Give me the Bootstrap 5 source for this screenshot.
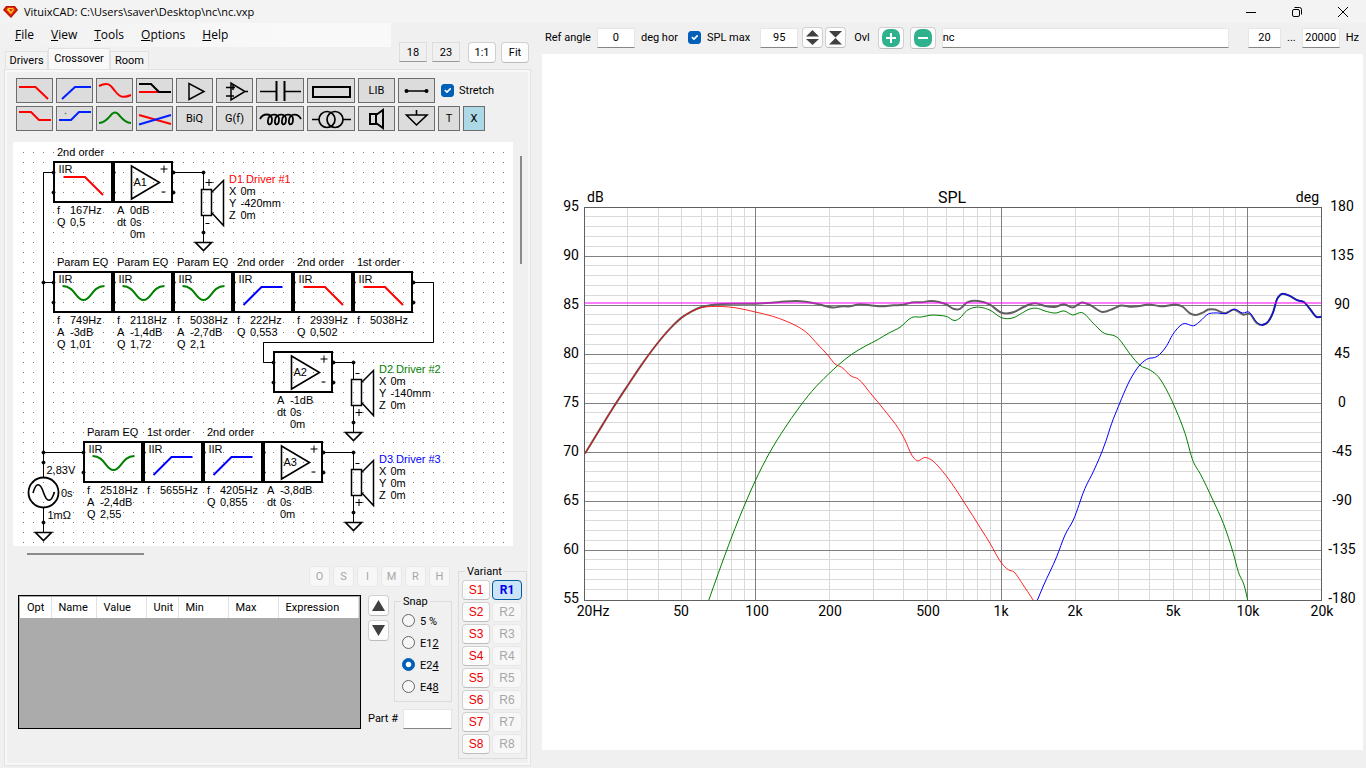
<!DOCTYPE html>
<html lang="en">
<head>
<meta charset="utf-8">
<meta name="viewport" content="width=device-width, initial-scale=1">
<title>VituixCAD: C:\Users\saver\Desktop\nc\nc.vxp</title>
<link rel="stylesheet" href="https://cdn.jsdelivr.net/npm/bootstrap@5.3.0/dist/css/bootstrap.min.css">
<style>
  body { background: #f0f0f0; color: #000; font: 11px/16px Roboto, "Liberation Sans", sans-serif; min-height: 100vh; }
  svg { display: block; }
  svg text { white-space: pre; }
  .title-bar { height: 23px; background: #f3f3f3; padding-left: 3px; }
  .title-text { font: 11px/22px "Open Sans", "Noto Sans", sans-serif; margin-left: 5px; }
  .win-btn { width: 46px; height: 22px; border: 0; background: none; padding: 0; display: grid; place-items: center; }
  .side { flex: 0 0 532px; }
  .menu-strip { width: 391px; height: 24px; gap: 17px; padding-left: 15px; background: linear-gradient(90deg, #f1f1f1, #f9f9f9 75%); font: 12px/24px "Open Sans", "Noto Sans", sans-serif; }
  .menu-strip a { color: #000; text-decoration: none; }
  .tab-strip { height: 22px; padding-left: 5px; }
  .tab-strip .nav-link { padding: 0; height: 18px; text-align: center; color: #000; border: 1px solid #e2e2e2; border-bottom: 0; border-radius: 0; background: #f3f3f3; line-height: 18px; width: 43px; }
  .tab-strip .nav-link.active { height: 21px; width: 62px; background: #f9f9f9; line-height: 19px; }
  .tab-strip .last-tab { width: 39px; }
  .zoom-tools { padding-top: 19px; gap: 5px; }
  .page-frame { border: 1px solid #e2e2e2; box-shadow: inset 0 0 0 2px #f8f8f8; margin: 0 1px 2px 4px; padding: 8px 2px 6px 8px; }
  .field { height: 20px; border: 1px solid #e6e6e6; border-bottom: 1px solid #868686; border-radius: 0; background: #fff; text-align: center; font: inherit; padding: 0; color: #000; min-width: 0; min-height: 0; }
  .field.grayed { background: #f0f0f0; width: 28px; border-color: #ddd #ddd #999; }
  .push { height: 21px; padding: 0; font: inherit; color: #000; background: #fdfdfd; border: 1px solid #d0d0d0; border-bottom-color: #bcbcbc; border-radius: 4px; display: grid; place-items: center; }
  .w21 { width: 21px; }
  .w28 { width: 28px; }
  .w38 { width: 38px; }
  .push:disabled { color: #a6a6a6; background: #f7f7f7; border-color: #e8e8e8; opacity: 1; }
  .part-bar { gap: 3px; padding-left: 3px; margin-bottom: 3px; }
  .part-btn { width: 37px; height: 25px; padding: 0; border: 1px solid #6d6d6d; border-radius: 0; background: #dcdcdc; font: 11px/23px Roboto, sans-serif; color: #000; }
  .part-btn svg { width: 100%; height: 23px; fill: none; stroke: #000; stroke-width: 2; }
  .part-btn.wide { width: 48px; }
  .part-btn.slim { width: 22px; }
  .part-btn.del { background: #add8e6; }
  .form-check-input { width: 13px; height: 13px; margin: 0; border: 1px solid #666; background-color: #f6f6f6; flex: none; }
  .form-check-input:checked { background-color: #005fb8; border-color: #005fb8; }
  .form-check-input[type=checkbox] { border-radius: 3px; }
  .board-row { padding-top: 8px; }
  .board { width: 500px; height: 404px; background: #fff; }
  .thumb-v { width: 2px; height: 108px; background: #8a8a8a; margin: 14px 0 0 7px; }
  .thumb-h { width: 117px; height: 2px; background: #8a8a8a; margin: 7px 0 0 14px; }
  .lower { gap: 6px; padding-top: 11px; }
  .osim { gap: 3px; padding-right: 2px; }
  .parts-box { width: 343px; height: 134px; border: 1px solid #000; background: #ababab; padding: 1px; }
  .parts-tbl { width: 100%; margin: 0; table-layout: fixed; }
  .parts-tbl th { background: #fff; border-right: 1px solid #e2e2e2; height: 21px; padding: 0 0 0 7px; font-weight: 400; line-height: 21px; }
  .frame-box { border: 1px solid #dcdcdc; margin: 0; position: relative; }
  .frame-box legend { position: absolute; top: -8px; left: 6px; width: auto; float: none; font: inherit; padding: 0 2px; margin: 0; background: #f0f0f0; }
  .snap { width: 58px; height: 101px; padding: 11px 0 0 7px; gap: 6px; margin: 6px 0 0 5px; }
  .snap div { gap: 5px; }
  .snap label { padding-top: 1px; line-height: 15px; }
  .snap .form-check-input { margin-top: 1px; }
  .variant { width: 69px; height: 188px; margin-top: 5px; padding: 8px 3px 0; display: grid; grid-template-columns: 28px 30px; column-gap: 2px; row-gap: 2px; align-content: start; }
  .variant .push { height: 20px; width: 100%; }
  .variant .push:not(.on) { font-size: 12px; font-family: "Liberation Sans", sans-serif; }
  .variant .s-btn { color: #f00000; }
  .variant .on { background: #cce4f7; border: 1px solid #005a9e; color: #0000f0; font-weight: 700; font-size: 12px; }
  .plot-bar { height: 31px; padding: 0 3px 2px 3px; }
  .plot-area { background: #fff; margin: 0 3px 18px 0; }
  .ring { width: 26px; height: 22px; }
  .gap-a { margin-left: 6px; }
  .gap-b { margin-left: 10px; }
  .gap-c { margin-left: 2px; }
  .chart { font-family: Roboto, "Liberation Sans", sans-serif; font-size: 14px; }
</style>
</head>
<body class="d-flex flex-column">

<header class="title-bar d-flex align-items-center">
  <svg width="16" height="16" viewBox="0 0 16 16" aria-hidden="true">
    <path d="M3 2h9l3 4-7 8L0 6z" fill="#b51405"/><path d="M4 3h7l2 3-5 6-6-6z" fill="#ee2a10"/><path d="M5 4h5l1 2-3 4-4-4z" fill="#ffd21c"/><path d="M6 5l2 3 2-3" fill="#d93a10"/>
  </svg>
  <span class="title-text me-auto">VituixCAD: C:\Users\saver\Desktop\nc\nc.vxp</span>
  <button class="win-btn" aria-label="Minimize"><svg width="12" height="12" viewBox="0 0 12 12"><path d="M1 6.500h10" stroke="#000"/></svg></button>
  <button class="win-btn" aria-label="Restore"><svg width="12" height="12" viewBox="0 0 12 12" fill="none" stroke="#000"><rect x="1.500" y="3.500" width="7" height="7" rx="1.500"/><path d="M3.500 1.500h5a2 2 0 0 1 2 2v5"/></svg></button>
  <button class="win-btn" aria-label="Close"><svg width="12" height="12" viewBox="0 0 12 12"><path d="M1 1l10 10M11 1L1 11" stroke="#000"/></svg></button>
</header>

<div class="d-flex flex-grow-1">
  <div class="side d-flex flex-column">
    <div class="d-flex">
      <div>
        <nav class="menu-strip d-flex">
          <a href="#"><u>F</u>ile</a><a href="#"><u>V</u>iew</a><a href="#"><u>T</u>ools</a><a href="#"><u>O</u>ptions</a><a href="#"><u>H</u>elp</a>
        </nav>
        <nav class="tab-strip nav align-items-end">
          <a class="nav-link" href="#">Drivers</a>
          <a class="nav-link active" href="#">Crossover</a>
          <a class="nav-link last-tab" href="#">Room</a>
        </nav>
      </div>
      <div class="zoom-tools d-flex ms-2">
        <input class="field grayed" value="18" aria-label="Columns">
        <input class="field grayed" value="23" aria-label="Rows">
        <button class="push w28" style="margin-left:3px">1:1</button>
        <button class="push w28">Fit</button>
      </div>
    </div>

    <main class="page-frame flex-grow-1">
      <div class="part-bar d-flex align-items-center">
        <button class="part-btn" aria-label="Low pass"><svg viewBox="0 0 35 23"><path stroke="red" d="M2 8h16.500l12.500 12"/></svg></button>
        <button class="part-btn" aria-label="High pass"><svg viewBox="0 0 35 23"><path stroke="#0020ff" d="M5 20L18 8h16"/></svg></button>
        <button class="part-btn" aria-label="Shelf"><svg viewBox="0 0 35 23"><path stroke="red" d="M2 7C12 2 14 7 18 12S25 20 34 16"/></svg></button>
        <button class="part-btn" aria-label="Shelving low pass"><svg viewBox="0 0 35 23"><path stroke="red" d="M2 13h20"/><path d="M2 5h12l8 8h12"/></svg></button>
        <button class="part-btn" aria-label="Buffer"><svg viewBox="0 0 35 23"><path stroke-width="1.500" d="M12 4.500v16l15-8z"/></svg></button>
        <button class="part-btn" aria-label="Op amp"><svg viewBox="0 0 35 23"><path stroke-width="1.500" d="M14 4v17l14-8.500zM9 8.500h9M9 17h8M28 12.500h3M16 6v5"/></svg></button>
        <button class="part-btn wide" aria-label="Capacitor"><svg viewBox="0 0 46 23"><path d="M19.500 2v20M27.500 2v20"/><path stroke-width="1.500" d="M3 12.500h16M28 12.500h16"/></svg></button>
        <button class="part-btn wide" aria-label="Resistor"><svg viewBox="0 0 46 23"><rect x="5" y="8" width="37" height="10"/></svg></button>
        <button class="part-btn">LIB</button>
        <button class="part-btn" aria-label="Wire"><svg viewBox="0 0 35 23"><path stroke-width="1.500" d="M7 12h21"/><circle cx="7.500" cy="12" r="1" fill="#000"/><circle cx="27.500" cy="12" r="1" fill="#000"/></svg></button>
        <input class="form-check-input" style="margin-left:3px" type="checkbox" id="stretch" checked>
        <label for="stretch" class="gap-c">Stretch</label>
      </div>
      <div class="part-bar d-flex">
        <button class="part-btn" aria-label="Shelf down"><svg viewBox="0 0 35 23"><path stroke="red" d="M2 5h12l8 8h12"/></svg></button>
        <button class="part-btn" aria-label="Shelf up"><svg viewBox="0 0 35 23"><path stroke="#0020ff" d="M2 13h12l8-8h12"/><circle cx="8.500" cy="6.500" r=".5" stroke="#777" stroke-width="1"/></svg></button>
        <button class="part-btn" aria-label="Parametric EQ"><svg viewBox="0 0 35 23"><path stroke="green" d="M2 16C12 15 13 5.500 18 5.500S24 15 34 16"/></svg></button>
        <button class="part-btn" aria-label="Crossed slopes"><svg viewBox="0 0 35 23"><path stroke="red" d="M2 8l32 9"/><path stroke="#0020ff" d="M2 17.500L34 8"/></svg></button>
        <button class="part-btn">BiQ</button>
        <button class="part-btn">G(f)</button>
        <button class="part-btn wide" aria-label="Inductor"><svg viewBox="0 0 46 23"><path stroke-width="1.800" d="M3 12C6 6 14 6 15 12C15 19 10 19 11 13C12 6 22 6 22 12C22 19 17 19 18 13C19 6 29 6 29 12C29 19 24 19 25 13C26 6 36 6 36 12C36 19 31 19 32 13C33 6 41 6 44 12"/></svg></button>
        <button class="part-btn wide" aria-label="Transformer"><svg viewBox="0 0 46 23"><g stroke-width="1.700"><circle cx="19" cy="12.500" r="8"/><circle cx="27" cy="12.500" r="8"/><path d="M4 12.500h7M35 12.500h8"/></g></svg></button>
        <button class="part-btn" aria-label="Loudspeaker"><svg viewBox="0 0 35 23"><path d="M11 7h6v10h-6zM17 8l7-5v18l-7-5"/></svg></button>
        <button class="part-btn" aria-label="Ground"><svg viewBox="0 0 35 23"><path stroke-width="1.600" d="M17.500 3v5M7.500 8h20.500L17.500 18z"/></svg></button>
        <button class="part-btn slim">T</button>
        <button class="part-btn slim del">X</button>
      </div>

      <div class="board-row d-flex">
        <svg class="board" id="board" viewBox="13 142 500 404" fill="none" stroke="#000" stroke-width="1" font-family="Liberation Sans, Arial, sans-serif" font-size="11" role="img" aria-label="Crossover schematic"></svg>
        <div class="thumb-v"></div>
      </div>
      <div class="thumb-h"></div>

      <div class="lower d-flex">
        <div style="padding-left:5px">
          <div class="osim d-flex justify-content-end">
            <button class="push w21" disabled>O</button><button class="push w21" disabled>S</button><button class="push w21" disabled>I</button><button class="push w21" disabled>M</button><button class="push w21" disabled>R</button><button class="push w21" disabled>H</button>
          </div>
          <div class="d-flex mt-2">
            <div class="parts-box">
              <table class="parts-tbl">
                <colgroup><col style="width:31px"><col style="width:45px"><col style="width:50px"><col style="width:32px"><col style="width:50px"><col style="width:50px"><col></colgroup>
                <thead><tr><th>Opt</th><th>Name</th><th>Value</th><th>Unit</th><th>Min</th><th>Max</th><th>Expression</th></tr></thead>
              </table>
            </div>
            <div style="margin-left:7px">
              <div class="d-flex">
                <div class="d-flex flex-column gap-1">
                  <button class="push w21" aria-label="Move up"><svg width="15" height="13"><path d="M7.500 1L14 12H1z" fill="#404040"/></svg></button>
                  <button class="push w21" aria-label="Move down"><svg width="15" height="13"><path d="M7.500 12L14 1H1z" fill="#404040"/></svg></button>
                </div>
                <fieldset class="frame-box snap d-flex flex-column">
                  <legend>Snap</legend>
                  <div class="d-flex"><input class="form-check-input" type="radio" name="snap" id="s5"><label for="s5">5 %</label></div>
                  <div class="d-flex"><input class="form-check-input" type="radio" name="snap" id="s12"><label for="s12">E1<u>2</u></label></div>
                  <div class="d-flex"><input class="form-check-input" type="radio" name="snap" id="s24" checked><label for="s24">E2<u>4</u></label></div>
                  <div class="d-flex"><input class="form-check-input" type="radio" name="snap" id="s48"><label for="s48">E4<u>8</u></label></div>
                </fieldset>
              </div>
              <div class="d-flex align-items-center justify-content-between" style="margin-top:7px">
                <label for="part">Part #</label><input class="field" id="part" style="width:49px">
              </div>
            </div>
          </div>
        </div>
        <fieldset class="frame-box variant" id="variant"><legend>Variant</legend></fieldset>
      </div>
    </main>
  </div>

  <section class="d-flex flex-column flex-grow-1" style="padding-left:10px">
    <div class="plot-bar d-flex align-items-center">
      <label for="ref">Ref angle</label>
      <input class="field gap-a w38" id="ref" value="0">
      <span class="gap-a">deg hor</span>
      <input class="form-check-input gap-b" type="checkbox" id="splmax" checked>
      <label for="splmax" class="gap-a">SPL max</label>
      <input class="field gap-b w38" value="95" aria-label="SPL maximum">
      <button class="push w21 ms-1" aria-label="Expand"><svg width="15" height="19"><path d="M7.500 2L14 8.500H1zM7.500 17L14 11H1z" fill="#404040"/></svg></button>
      <button class="push w21 gap-c" aria-label="Compress"><svg width="15" height="19"><path d="M1 3h13L7.500 9.500zM1 16.500h13L7.500 10z" fill="#404040"/></svg></button>
      <span class="ms-2">Ovl</span>
      <button class="push ring ms-2" aria-label="Add overlay"><svg width="20" height="18"><rect x="1" y="0" width="18" height="18" rx="7" fill="#2fb18e"/><path d="M10 4v10M5 9h10" stroke="#fff" stroke-width="2"/></svg></button>
      <button class="push ring gap-a" aria-label="Remove overlay"><svg width="20" height="18"><rect x="1" y="0" width="18" height="18" rx="7" fill="#2fb18e"/><path d="M5 9h10" stroke="#fff" stroke-width="2"/></svg></button>
      <input class="field flex-grow-1 text-start gap-a" value="nc" aria-label="Overlay name">
      <input class="field" value="20" aria-label="Minimum frequency" style="width:33px;margin-left:19px">
      <span class="gap-a">...</span>
      <input class="field gap-a w38" id="fmax" value="20000">
      <label for="fmax" class="gap-a me-1">Hz</label>
    </div>
    <div class="plot-area flex-grow-1">
      <svg class="chart" id="chart" width="100%" viewBox="542 54 821 694" role="img" aria-label="SPL chart"></svg>
    </div>
  </section>
</div>

<script src="https://cdn.jsdelivr.net/npm/bootstrap@5.3.0/dist/js/bootstrap.bundle.min.js"></script>
<script>
// ---- variant buttons ----
const variant = document.getElementById('variant');
for (let i = 1; i <= 8; i++) {
  variant.insertAdjacentHTML('beforeend',
    `<button class="push s-btn">S${i}</button><button class="push ${i === 1 ? 'on' : ''}" ${i === 1 ? '' : 'disabled'}>R${i}</button>`);
}

// ---- schematic ----
const txt = (x, y, s, c = '#000') => `<text x="${x}" y="${y}" fill="${c}" stroke="none">${s}</text>`;
const dot = (x, y) => `<circle cx="${x}" cy="${y}" r="1.500" fill="#000"/>`;
const shapes = {
  lp: '<path stroke="red" stroke-width="2" d="M10 4.500h21.500l18 18"/>',
  hp: '<path stroke="#00f" stroke-width="2" d="M10 22.500l18-18h21"/>',
  eq: '<path stroke="green" stroke-width="2" d="M9 3.500C22 4 22 17.500 30 17.500S38 4 51 3.500"/>'
};
let b = '';
for (let y = 152; y < 546; y += 10) b += `<path stroke="#777" stroke-dasharray="1 9" d="M23 ${y + .5}H504"/>`;

function block(x, y, kind, title, rows) {
  b += `<g transform="translate(${x} ${y})"><rect x="0.500" y="-10.500" width="58" height="40" stroke-width="2"/>`;
  b += dot(0, 0) + dot(0, 20) + dot(60, 0) + dot(60, 20);
  if (kind[0] === 'A') {
    b += `<path stroke-width="1.600" d="M18-6.500L46 10 18 26.500z"/><path d="M47-3.500h7M50.500-7v7M48 19.500h4"/>` + txt(20, 13.5, kind);
  } else {
    b += shapes[kind] + txt(5, 0.5, 'IIR') + txt(3.5, -16.5, title);
  }
  rows.forEach((r, i) => { b += txt(3.5, 41.5 + 12 * i, r[0]) + txt(16.5, 41.5 + 12 * i, r[1]); });
  b += '</g>';
}
function ground(x, y) { b += `<path stroke-width="1.600" d="M${x - 8} ${y}h16l-8 8z"/>`; }
function driver(x, y, name, color, yPos, plusTop) {
  const plus = cy => `<path d="M2 ${cy}h7M5.500 ${cy - 3.5}v7"/>`, minus = cy => `<path d="M2 ${cy}h4"/>`;
  b += `<g transform="translate(${x} ${y})">` + dot(0, 0) + dot(0, 60) +
    `<path d="M0 0v17M0 43v27"/><path stroke-width="1.500" d="M-2 17h10v26h-10zM8 20L20 8v45L8 40"/>` +
    (plusTop ? plus(10) + minus(51) : minus(11) + plus(50)) +
    txt(25.5, 10.5, name, color) + txt(25.5, 22.5, 'X') + txt(37, 22.5, '0m') +
    txt(25.5, 34.5, 'Y') + txt(37, 34.5, yPos) + txt(25.5, 46.5, 'Z') + txt(37, 46.5, '0m') + '</g>';
  ground(x, y + 70);
}
block(53.5, 172.5, 'lp', '2nd order', [['f', '167Hz'], ['Q', '0,5']]);
block(113.5, 172.5, 'A1', '', [['A', '0dB'], ['dt', '0s'], ['', '0m']]);
block(53.5, 282.5, 'eq', 'Param EQ', [['f', '749Hz'], ['A', '-3dB'], ['Q', '1,01']]);
block(113.5, 282.5, 'eq', 'Param EQ', [['f', '2118Hz'], ['A', '-1,4dB'], ['Q', '1,72']]);
block(173.5, 282.5, 'eq', 'Param EQ', [['f', '5038Hz'], ['A', '-2,7dB'], ['Q', '2,1']]);
block(233.5, 282.5, 'hp', '2nd order', [['f', '222Hz'], ['Q', '0,553']]);
block(293.5, 282.5, 'lp', '2nd order', [['f', '2939Hz'], ['Q', '0,502']]);
block(353.5, 282.5, 'lp', '1st order', [['f', '5038Hz']]);
block(273.5, 362.5, 'A2', '', [['A', '-1dB'], ['dt', '0s'], ['', '0m']]);
block(83.5, 452.5, 'eq', 'Param EQ', [['f', '2518Hz'], ['A', '-2,4dB'], ['Q', '2,55']]);
block(143.5, 452.5, 'hp', '1st order', [['f', '5655Hz']]);
block(203.5, 452.5, 'hp', '2nd order', [['f', '4205Hz'], ['Q', '0,855']]);
block(263.5, 452.5, 'A3', '', [['A', '-3,8dB'], ['dt', '0s'], ['', '0m']]);
driver(203.5, 172.5, 'D1 Driver #1', 'red', '-420mm', true);
driver(353.5, 362.5, 'D2 Driver #2', 'green', '-140mm', false);
driver(353.5, 452.5, 'D3 Driver #3', 'blue', '0m', false);
b += '<path d="M53.500 172.500H43.500V477M43.500 282.500h10M43.500 452.500h40M173.500 172.500h30M333.500 362.500h20M323.500 452.500h30M413.500 282.500h20v60h-170v20h10M43.500 508v24"/>';
b += dot(43.5, 282.5) + dot(43.5, 452.5) + dot(43.5, 462.5) + dot(43.5, 522.5);
b += '<circle cx="43.500" cy="492.500" r="15" stroke-width="1.800"/><path stroke-width="1.600" d="M33 493C36 482 40 482 43.500 492.500S51 503 54.500 492"/>';
ground(43.5, 532.5);
b += txt(46.5, 474, '2,83V') + txt(61, 497, '0s') + txt(47.5, 519, '1mΩ');
document.getElementById('board').innerHTML = b;

// ---- chart ----
const fx = f => 1001.5 + 245.7 * Math.log10(f / 1000), X0 = 584.5, X1 = 1321.5, Y0 = 207.5, Y1 = 600.5;
const snap = v => Math.floor(v) + .5;
let minor = '', major = '';
for (let d = 10; d <= 10000; d *= 10) for (let k = 1; k < 10; k++) {
  const f = d * k; if (f <= 20 || f >= 20000) continue;
  if (k === 1) major += `M${snap(fx(f))} ${Y0}V${Y1}`; else minor += `M${snap(fx(f))} ${Y0}V${Y1}`;
}
for (let i = 1; i < 40; i++) { const p = `M${X0} ${snap(Y0 + i * 9.8 - .5)}H${X1}`; if (i % 5) minor += p; else major += p; }
function curve(a) {
  let d = `M${a[0]} ${a[1]}`; const n = a.length / 2, P = i => { i = Math.max(0, Math.min(n - 1, i)); return [a[2 * i], a[2 * i + 1]]; };
  // slope at each point, weighted by the neighbouring spans
  const m = [];
  for (let i = 0; i < n; i++) {
    const p = P(i - 1), q = P(i), r = P(i + 1), h0 = q[0] - p[0], h1 = r[0] - q[0];
    if (!h0) m.push((r[1] - q[1]) / h1);
    else if (!h1) m.push((q[1] - p[1]) / h0);
    else m.push((h1 * (q[1] - p[1]) / h0 + h0 * (r[1] - q[1]) / h1) / (h0 + h1));
  }
  for (let i = 0; i < n - 1; i++) {
    const q = P(i), r = P(i + 1), h = (r[0] - q[0]) / 3;
    d += `C${(q[0] + h).toFixed(2)} ${(q[1] + m[i] * h).toFixed(2)} ${(r[0] - h).toFixed(2)} ${(r[1] - m[i + 1] * h).toFixed(2)} ${r[0]} ${r[1]}`;
  }
  return d;
}
const rise = [585,453.5,598,432.3,611.7,410,627.7,385.5,641.7,364.6,657.3,343.5,670,328.6,681.3,317.9,691.7,311.3];
const tail = [1261.7,325,1268.3,321.5,1273.3,311.7,1276.7,300,1280.7,294.5,1288.3,295.3,1297.3,300.3,1304.3,302.3,1310,309,1316.7,317,1321.3,316.7];
const total = [...rise,701.3,307,711.7,305,721.7,304,755.3,303.7,771.7,302.7,785,301.5,800,301.2,811.7,302.7,821.7,305,833.3,307.5,841.7,306.3,850,306.3,858.3,304.4,870,305.3,881.7,306.3,893.3,305.3,903.3,304.7,911.7,302.4,921.7,302.3,930.7,300.9,940,302.3,946.7,304.5,953.3,308.8,960,308.8,966.7,302.7,971.7,301,978.3,301,990,304.7,1001,312.5,1013.3,312.3,1021.7,308,1030,304.3,1035,303.2,1045,306,1056,306.7,1064,304.2,1072.7,307.5,1081.7,302.6,1090,305,1102.3,312,1113.3,308.7,1121,305.5,1130,306.7,1140,306,1148.3,304.4,1160,306.3,1182.7,306.7,1190,313.3,1195,315,1203.3,312.3,1208.3,309.5,1215,309.5,1225,313.3,1234,309.4,1243.3,314.7,1250,314,1256.7,323,...tail];
const red = [...rise,701.3,307.7,711.7,306.5,721.7,306.5,735,307.7,755.3,312,771.7,316,785,320.7,796.7,326,806.7,332.7,818.3,345,827.7,355,835,364,841.7,367.3,851,376,858.3,379,870,392.7,888.3,415,898.3,428.3,905,440,911.7,455,916.7,460.5,925,457.5,931.7,460,940,468.3,951.7,483.3,963.3,501,981.7,530,990,543.3,1001.7,563.3,1008.3,569.7,1014,572,1021.7,582.7,1033.3,600.3];
const green = [708.7,600.3,718.3,573.3,731.7,537,745,504,755.3,480.7,769.3,453.2,785,427.8,797.3,410,811.7,391.5,828.3,374.3,838.3,365,851.7,354.3,865,346.3,878.3,339.3,888.3,333.3,900,327.3,911.7,317.5,921.7,317,930,315.2,940,315.5,946.7,316.5,955,320.5,960,318,966.7,310.7,971.7,308.2,990,310.2,1001.7,317.8,1014,317.5,1021.7,313.3,1030,308.9,1036.7,308.2,1045,311,1056,313,1064,310.9,1072.7,315,1081.7,312.5,1093.3,323.3,1102.3,332,1118.3,338.3,1130,354,1140,365.3,1150,370,1158.3,376.7,1168.3,393.3,1176,410,1185,433.3,1193.3,461.7,1200,473.3,1213.3,501,1223.3,523.3,1233.3,553.3,1238.3,571.7,1245,588.3,1247.7,600.3];
const blue = [1037.3,600.3,1043.3,586,1056.7,556.7,1065,535,1073.3,520,1085,488.3,1093.3,471.7,1105.7,441.7,1111.7,423.3,1118.3,406.7,1121.7,398.3,1130,380,1139,366,1146.7,359.3,1157.3,356.3,1166.7,345.7,1172.3,335.3,1182.7,324,1195,325.3,1200,321.3,1208.3,314,1215,312.9,1226.7,313.3,1234.3,309.2,1242.7,313,1249.3,312.2,1256,321.5,...tail];
let c = `<g fill="none"><path stroke="#dadada" d="${minor}"/><path stroke="#808080" d="${major}"/><rect x="${X0}" y="${Y0}" width="${X1 - X0}" height="${Y1 - Y0}" stroke="#606060"/>
<path stroke="#606060" stroke-width="2" d="${curve(total)}"/>
<path stroke="red" stroke-opacity=".85" d="${curve(red)}"/><path stroke="green" d="${curve(green)}"/><path stroke="#00f" d="${curve(blue)}"/><path stroke="#1414c8" stroke-width="1.500" d="${curve(tail)}"/>
<path stroke="#f0f" stroke-opacity=".5" stroke-width="2" d="M${X0} 303H${X1}"/></g>`;
const lab = (x, y, s, a, size = 14) => `<text x="${x}" y="${y}" text-anchor="${a}" font-size="${size}">${s}</text>`;
for (let i = 0; i <= 8; i++) {
  const y = Math.round(211 + i * 49);
  c += lab(579, y, 95 - 5 * i, 'end') + lab(1342, y, 180 - 45 * i, 'middle');
}
[['20Hz', 593], ['50', 681], ['100', 757], ['200', 830], ['500', 928], ['1k', 1001], ['2k', 1075], ['5k', 1173], ['10k', 1248], ['20k', 1322]].forEach(l => { c += lab(l[1], 616, l[0], 'middle'); });
c += lab(587, 202, 'dB', 'start') + lab(952, 203, 'SPL', 'middle', 16) + lab(1319, 202, 'deg', 'end');
document.getElementById('chart').innerHTML = c;
</script>
</body>
</html>
